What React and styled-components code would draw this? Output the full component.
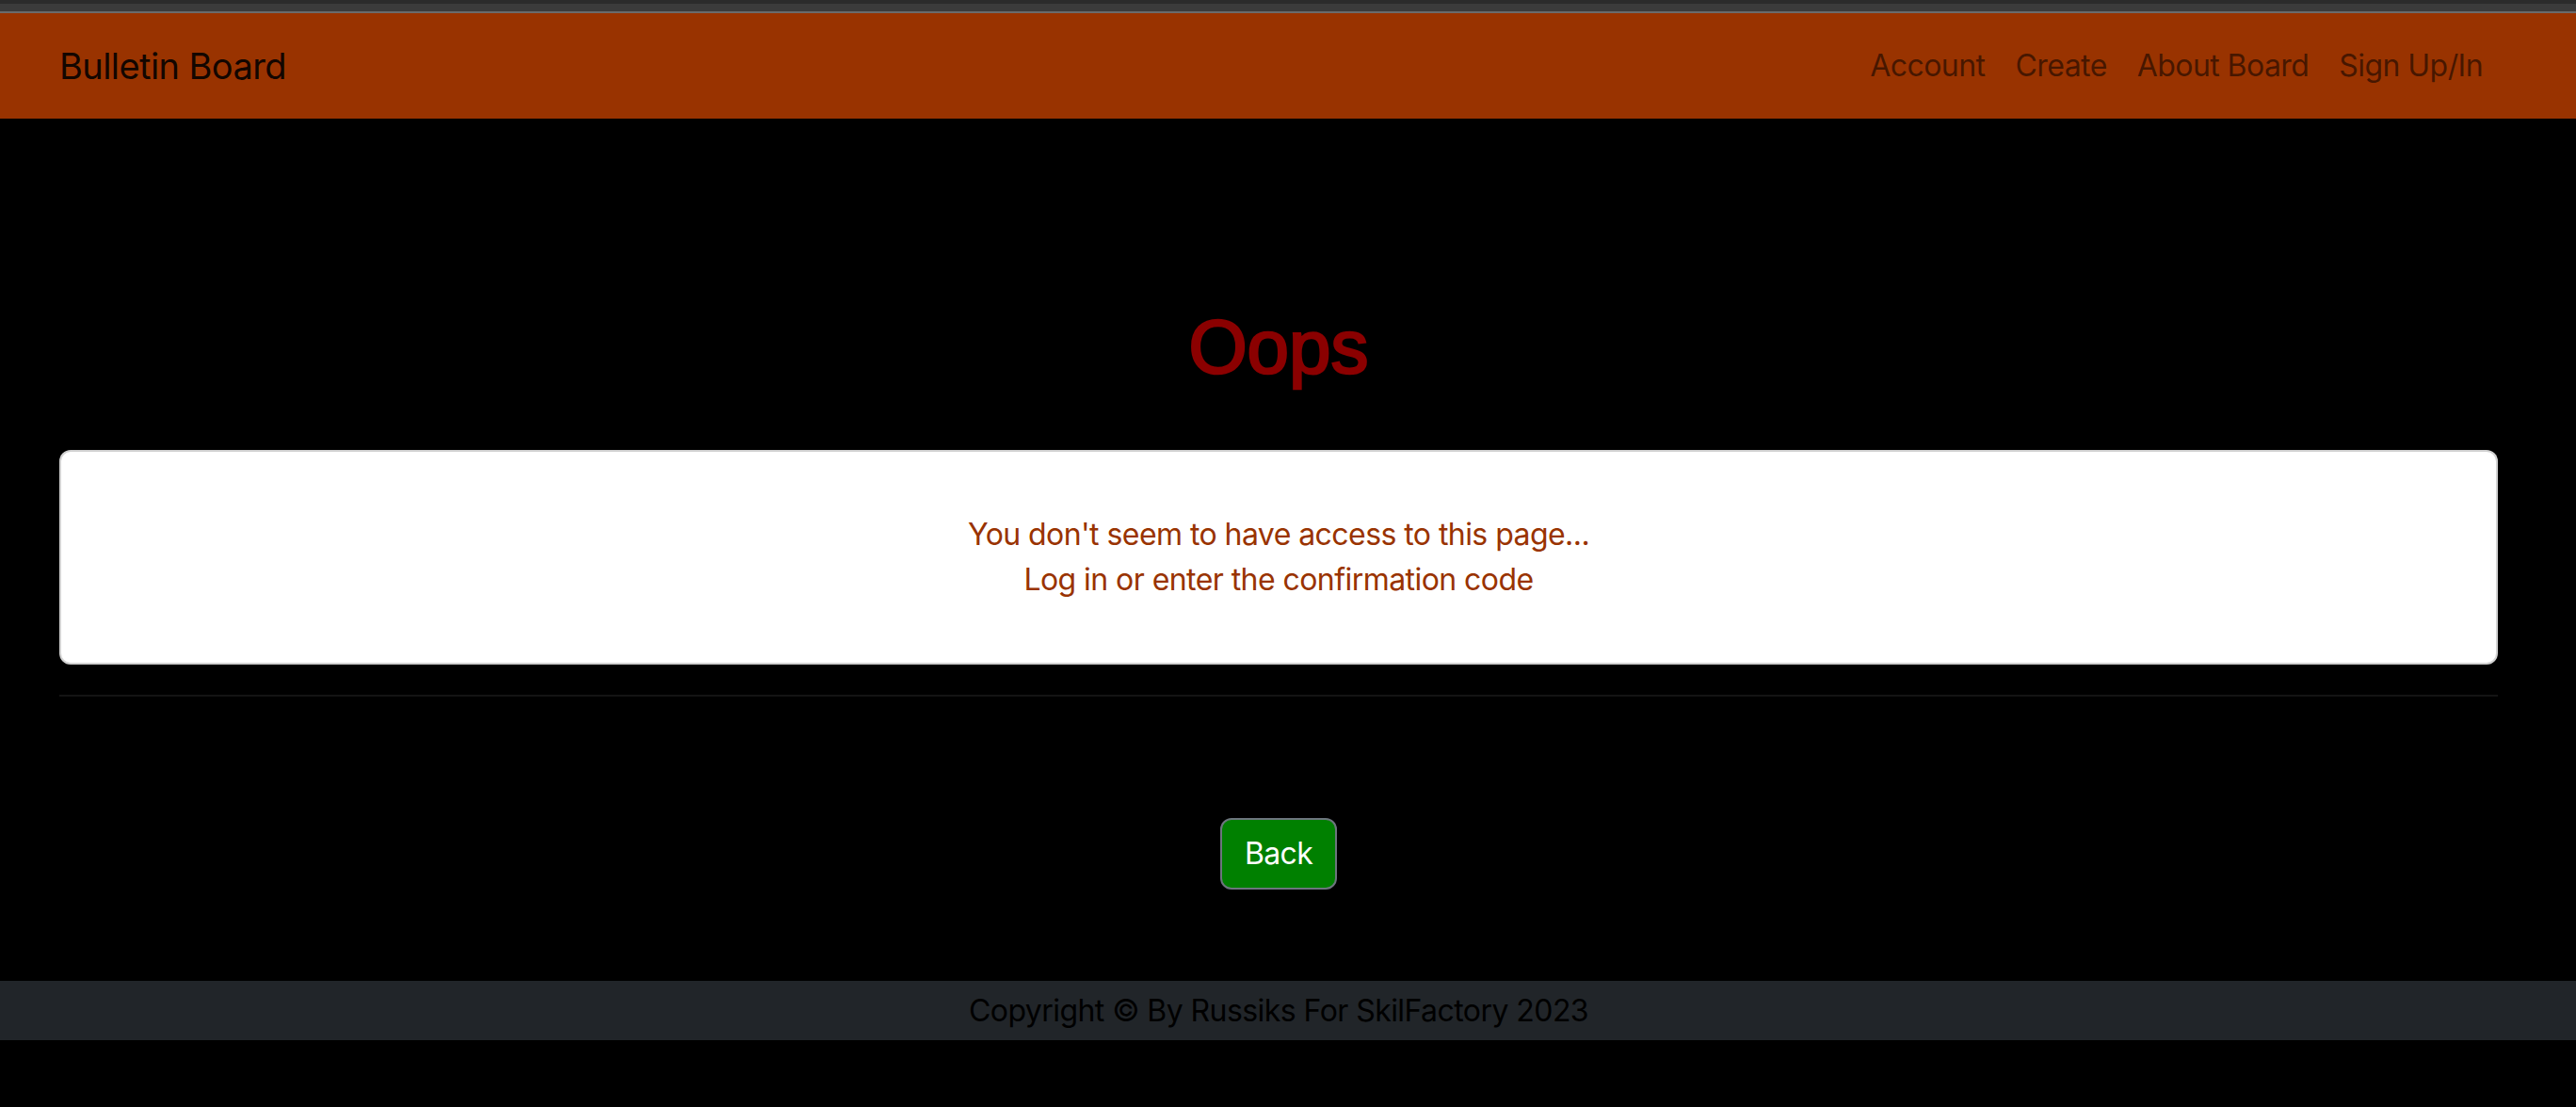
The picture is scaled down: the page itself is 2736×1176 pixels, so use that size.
import React from 'react'
import styled, {createGlobalStyle} from 'styled-components'

const GlobalStyle = createGlobalStyle`
  body {
    margin: 0;
    background: #000;
    font-family: Inter, 'Noto Sans', sans-serif;
    letter-spacing: -0.035em;
  }
`

const TopStrip = styled.div`
  height: 8px;
  background: #3b3b3b;
  border-top: 4px solid #2b2b2b;
  border-bottom: 2px solid #6b6b6b;
`

const Navbar = styled.nav`
  height: 112px;
  background: #993300;
  display: flex;
  align-items: center;
  justify-content: space-between;
  padding: 0 83px 0 63px;
`

const Brand = styled.a`
  font-size: 38px;
  line-height: 60px;
  letter-spacing: -0.015em;
  color: rgba(0, 0, 0, 0.9);
  text-decoration: none;
`

const NavList = styled.div`
  display: flex;
`

const NavLink = styled.a`
  padding: 0 16px;
  font-size: 32px;
  line-height: 48px;
  color: rgba(0, 0, 0, 0.55);
  text-decoration: none;
`

const Main = styled.main`
  padding: 0 83px 0 63px;
`

const Title = styled.h1`
  margin: 195px 0 61px;
  font-family: 'Liberation Sans', Arial, sans-serif;
  font-weight: 400;
  font-size: 80px;
  line-height: 96px;
  letter-spacing: 0;
  color: #8b0000;
  -webkit-text-stroke: 2.5px #8b0000;
  text-align: center;
`

const Card = styled.div`
  background: #fff;
  border: 2px solid rgba(0, 0, 0, 0.175);
  border-radius: 12px;
  padding: 64px 0;
  text-align: center;
  color: #993300;
  font-size: 32px;
  line-height: 48px;
`

const Divider = styled.hr`
  margin: 32px 0 0;
  border: 0;
  border-top: 2px solid #141414;
`

const Actions = styled.div`
  display: flex;
  justify-content: center;
  margin-top: 129px;
`

const BackButton = styled.button`
  background: #008000;
  border: 2px solid #6c757d;
  border-radius: 12px;
  padding: 12px 24px;
  font-family: inherit;
  font-size: 32px;
  line-height: 48px;
  letter-spacing: -0.02em;
  color: #fff;
  cursor: pointer;
`

const Footer = styled.footer`
  margin-top: 97px;
  background: #212529;
  padding: 7.5px 20px 7.5px 0;
  text-align: center;
  font-size: 32px;
  line-height: 48px;
  color: #000;
`

const links = ['Account', 'Create', 'About Board', 'Sign Up/In']

const App = () => {
  return (
    <>
      <GlobalStyle />
      <TopStrip />
      <Navbar>
        <Brand href="#">Bulletin Board</Brand>
        <NavList>
          {links.map((link) => (
            <NavLink key={link} href="#">
              {link}
            </NavLink>
          ))}
        </NavList>
      </Navbar>
      <Main>
        <Title>Oops</Title>
        <Card>
          You don't seem to have access to this page...
          <br />
          Log in or enter the confirmation code
        </Card>
        <Divider />
        <Actions>
          <BackButton>Back</BackButton>
        </Actions>
      </Main>
      <Footer>Copyright © By Russiks For SkilFactory 2023</Footer>
    </>
  )
}

export default App
